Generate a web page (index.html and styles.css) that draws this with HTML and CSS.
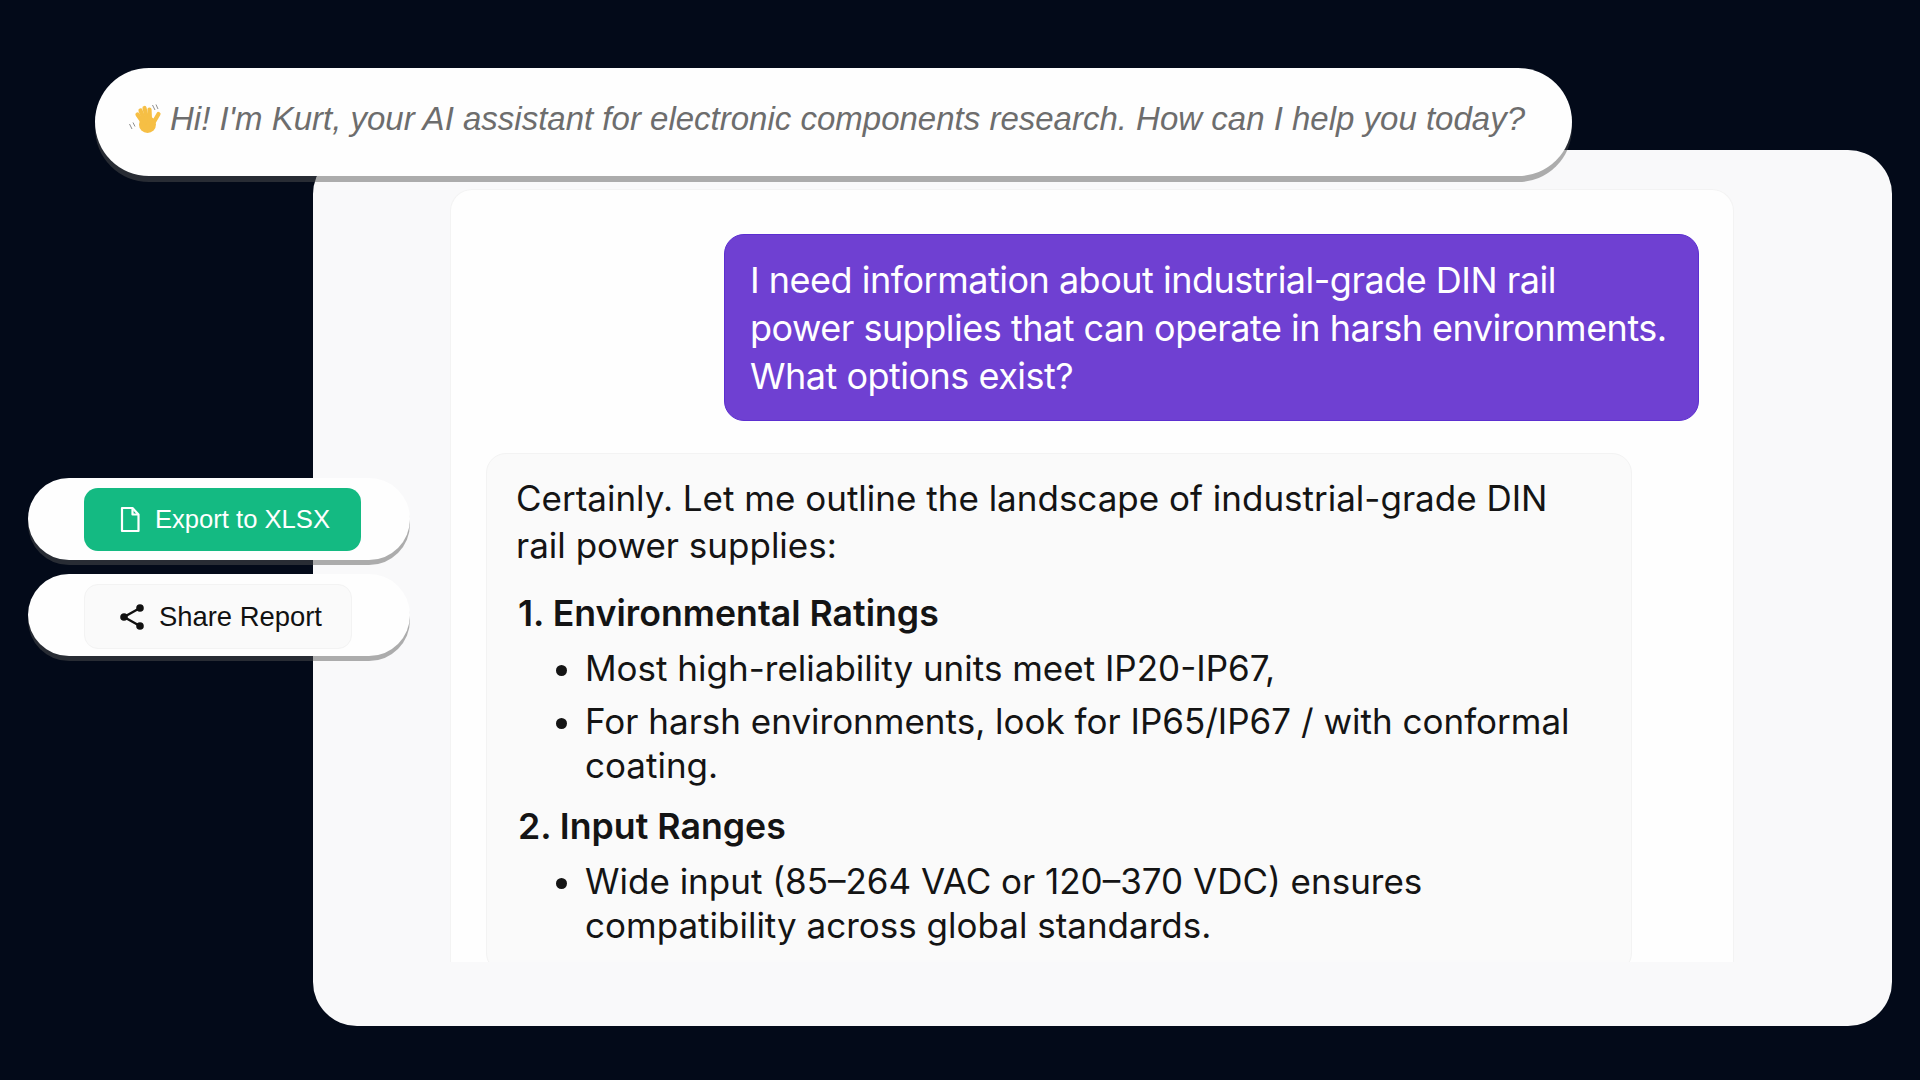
FILE: index.html
```html
<!DOCTYPE html>
<html lang="en">
<head>
    <meta charset="UTF-8">
    <title>Kurt AI assistant</title>
    <link rel="stylesheet" href="styles.css">
</head>
<body>
    <div class="panel">
        <div class="chat">
            <div class="user-msg">I need information about industrial-grade DIN rail<br>power supplies that can operate in harsh environments.<br>What options exist?</div>
            <div class="answer">
                <p class="intro">Certainly. Let me outline the landscape of industrial-grade DIN<br>rail power supplies:</p>
                <h3>1. Environmental Ratings</h3>
                <ul>
                    <li>Most high-reliability units meet IP20-IP67,</li>
                    <li>For harsh environments, look for IP65/IP67 / with conformal coating.</li>
                </ul>
                <h3>2. Input Ranges</h3>
                <ul>
                    <li>Wide input (85–264 VAC or 120–370 VDC) ensures compatibility across global standards.</li>
                </ul>
            </div>
        </div>
    </div>

    <div class="greeting">
        <svg class="wave" viewBox="0 0 44 40" width="44" height="40">
            <circle cx="23.500" cy="25.500" r="8.500" fill="#f6bf45"/>
            <g fill="none" stroke="#f6bf45" stroke-width="4.200" stroke-linecap="round">
                <path d="M20 25 L13.500 15.500"/>
                <path d="M21 23 L16.500 11.500"/>
                <path d="M23.500 22 L20.500 9"/>
                <path d="M26 22 L25.500 10.500"/>
                <path d="M27 28 L34.500 15"/>
            </g>
            <path fill="none" stroke="#8f8f8f" stroke-width="1" d="M5.500 25 L8 30 M9 23.500 L11 27.500 M28.500 6 L31 11 M32 5.500 L34 10"/>
        </svg>
        <span>Hi! I'm Kurt, your AI assistant for electronic components research. How can I help you today?</span>
    </div>

    <div class="actions">
        <div class="action-pill">
            <button class="btn btn-green">
                <svg viewBox="0 0 20 27" width="20" height="27" fill="none" stroke="#fff" stroke-width="2.200" stroke-linejoin="round">
                    <path d="M2 2 H12.500 L18.500 8.500 V25 H2 Z"/>
                    <path d="M12.500 2 V8.500 H18.500"/>
                </svg>
                Export to XLSX
            </button>
        </div>
        <div class="action-pill">
            <button class="btn btn-plain">
                <svg viewBox="0 0 24 28" width="24" height="28" fill="#111" stroke="#111" stroke-width="2.400">
                    <path fill="none" d="M20 5 L4 14 L20 23"/>
                    <circle cx="20" cy="5" r="2.600"/>
                    <circle cx="4" cy="14" r="2.600"/>
                    <circle cx="20" cy="23" r="2.600"/>
                </svg>
                Share Report
            </button>
        </div>
    </div>
</body>
</html>
```

FILE: styles.css
```css
body {
    margin: 0;
    height: 1080px;
    overflow: hidden;
    position: relative;
    background-color: #030a19;
    font-family: 'Inter', sans-serif;
    color: #141414;
}

.panel {
    box-sizing: border-box;
    margin: 150px 28px 0 313px;
    height: 876px;
    padding: 39px 158px 64px 137px;
    background-color: #f9f9fa;
    border-radius: 44px;
}

.chat {
    box-sizing: border-box;
    height: 100%;
    overflow: hidden;
    padding: 44px 35px 0 35px;
    background-color: #fefefe;
    border: 1px solid #f3f3f3;
    border-bottom: none;
    border-radius: 22px 22px 0 0;
}

.user-msg {
    box-sizing: border-box;
    width: 975px;
    height: 187px;
    margin-left: 238px;
    padding: 21px 0 0 25px;
    background-color: #6f40d2;
    border: 1px solid #5c2fd0;
    border-radius: 20px;
    color: #fff;
    font-size: 36px;
    line-height: 48px;
    letter-spacing: -0.5px;
}

.answer {
    box-sizing: border-box;
    width: 1146px;
    height: 520px;
    margin-top: 32px;
    padding: 21px 30px 0 29px;
    background-color: #fafafa;
    border: 1px solid #f3f3f3;
    border-radius: 20px;
    font-size: 35px;
    line-height: 44.5px;
}

.intro {
    margin: 0;
    line-height: 46.5px;
}

.answer h3 {
    margin: 21px 0 0 2px;
    font-size: 35.7px;
    line-height: 48px;
    font-weight: 600;
}

.answer ul + h3 {
    margin-top: 14px;
}

.answer ul {
    margin: 9px 0 0 0;
    padding: 0 0 0 69px;
}

.answer li {
    margin-bottom: 8px;
}

.greeting {
    position: absolute;
    top: 68px;
    left: 95px;
    width: 1477px;
    height: 108px;
    display: flex;
    align-items: center;
    gap: 2px;
    box-sizing: border-box;
    padding: 0 0 7px 29px;
    background-color: #fefefe;
    border-radius: 54px;
    box-shadow: 0 6px 0 rgba(84, 84, 84, 0.465);
    font-family: 'Liberation Sans', sans-serif;
    font-style: italic;
    font-size: 33px;
    color: #6d6d6d;
}

.wave {
    flex-shrink: 0;
}

.actions {
    position: absolute;
    top: 478px;
    left: 28px;
    display: flex;
    flex-direction: column;
    gap: 14px;
}

.action-pill {
    box-sizing: border-box;
    width: 382px;
    height: 82px;
    padding-left: 56px;
    display: flex;
    align-items: center;
    background-color: #fefefe;
    border-radius: 41px;
    box-shadow: 0 5px 0 rgba(84, 84, 84, 0.465);
}

.btn {
    display: flex;
    align-items: center;
    box-sizing: border-box;
    border-radius: 14px;
    font-family: 'Liberation Sans', sans-serif;
}

.btn-green {
    width: 277px;
    height: 63px;
    gap: 15px;
    padding: 0 0 0 36px;
    background-color: #14ba82;
    border: none;
    color: #fff;
    font-size: 25.6px;
}

.btn-plain {
    width: 268px;
    height: 65px;
    margin-top: 3px;
    gap: 15px;
    padding: 0 0 0 35px;
    background-color: #fafafa;
    border: 1px solid #f3f3f3;
    color: #111;
    font-size: 27.4px;
}
```
